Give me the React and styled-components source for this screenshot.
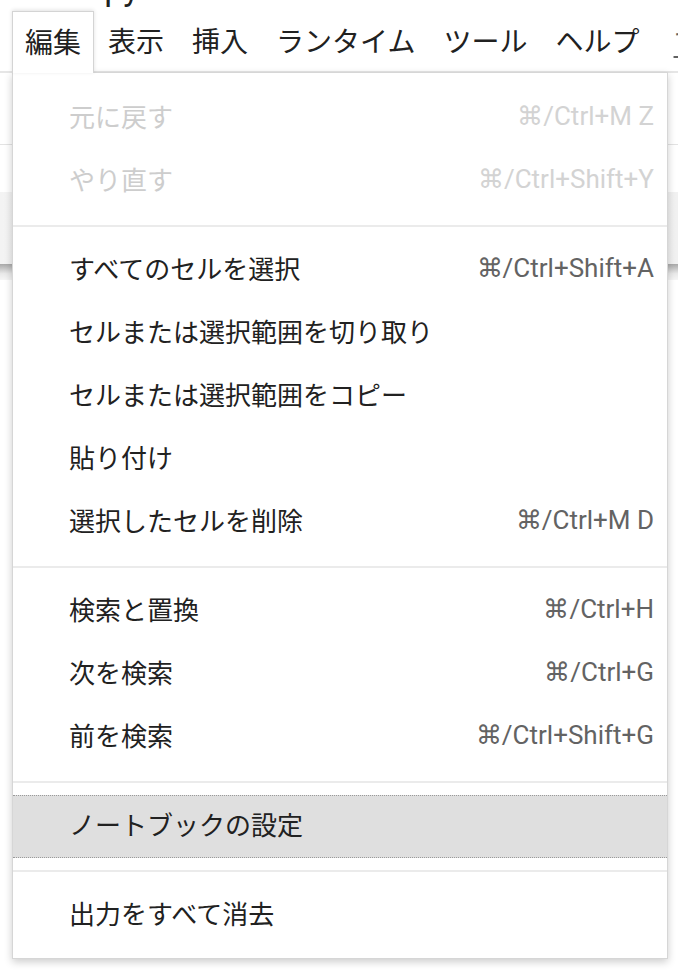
import React from 'react';
import styled, { createGlobalStyle } from 'styled-components';

// #region Styled Components

const GlobalStyle = createGlobalStyle`
  html, body {
    margin: 0;
    padding: 0;
    background: #ffffff;
  }
  body {
    font-family: Roboto, "Noto Sans CJK JP", "Noto Sans", sans-serif;
    color: #212121;
  }
`;

const Page = styled.div`
  position: relative;
  width: 678px;
  height: 970px;
  overflow: hidden;
  background: #ffffff;
`;

const TitleRow = styled.div`
  height: 11px;
  overflow: hidden;
  padding-left: 96px;
`;

const Title = styled.div`
  font-size: 34px;
  line-height: 34px;
  margin-top: -29px;
  color: #212121;
`;

const MenuBar = styled.div`
  display: flex;
  align-items: stretch;
  height: 60px;
  padding-left: 12px;
  border-bottom: 2px solid #e6e6e6;
`;

const MenuBarItem = styled.div`
  position: relative;
  z-index: ${(p) => (p.$open ? 3 : 1)};
  display: flex;
  align-items: center;
  padding: ${(p) => (p.$open ? '0 12px 3px' : '0 13px 3px')};
  font-size: 28px;
  color: #212121;
  white-space: nowrap;
  background: #ffffff;
  border: 1px solid ${(p) => (p.$open ? '#d4d4d4' : 'transparent')};
  border-bottom: none;
  margin-bottom: ${(p) => (p.$open ? '-2px' : '0')};
  box-shadow: ${(p) => (p.$open ? '0 -1px 4px rgba(0, 0, 0, 0.12)' : 'none')};
`;

const SavedLink = styled.div`
  display: flex;
  align-items: center;
  padding-bottom: 3px;
  margin-left: 20px;
  font-size: 28px;
  color: #616161;
  white-space: nowrap;
  text-decoration: underline;
  text-underline-offset: 4px;
`;

const Toolbar = styled.div`
  height: 71px;
  border-bottom: 1px solid #e3e3e3;
`;

const Spacer = styled.div`
  height: 47px;
`;

const CellArea = styled.div`
  height: 72px;
  background: linear-gradient(to right, #f3f3f3, #f9f9f9 30%, #f9f9f9 70%, #f1f1f1);
`;

const CellShade = styled.div`
  height: 16px;
  background: linear-gradient(to bottom, #a9a9a9, #e9e9e9 60%, #f6f6f6);
`;

const Dropdown = styled.div`
  position: absolute;
  z-index: 2;
  top: 72px;
  left: 12px;
  width: 654px;
  padding: 14px 0 11px;
  background: #ffffff;
  border: 1px solid #d6d6d6;
  box-shadow: 0 3px 8px rgba(0, 0, 0, 0.2);
`;

const Row = styled.div`
  display: flex;
  align-items: center;
  justify-content: space-between;
  height: 63px;
  padding: 0 13px 6px 56px;
  box-sizing: border-box;
  font-size: 26px;
  color: ${(p) => (p.$disabled ? '#cdcdcd' : '#212121')};
  background: ${(p) => (p.$active ? '#dfdfdf' : 'transparent')};
  border-top: ${(p) => (p.$active ? '1px dotted #9a9a9a' : 'none')};
  border-bottom: ${(p) => (p.$active ? '1px dotted #9a9a9a' : 'none')};
  white-space: nowrap;
`;

const Shortcut = styled.span`
  font-family: Roboto, "Noto Sans", sans-serif;
  font-size: 26px;
  color: ${(p) => (p.$disabled ? '#d3d3d3' : '#636363')};
`;

const Separator = styled.div`
  height: 2px;
  margin: 12px 0;
  background: #ebebeb;
`;

// #endregion Styled Components

const menuBar = ['編集', '表示', '挿入', 'ランタイム', 'ツール', 'ヘルプ'];

const groups = [
  [
    { label: '元に戻す', shortcut: '⌘/Ctrl+M Z', disabled: true },
    { label: 'やり直す', shortcut: '⌘/Ctrl+Shift+Y', disabled: true },
  ],
  [
    { label: 'すべてのセルを選択', shortcut: '⌘/Ctrl+Shift+A' },
    { label: 'セルまたは選択範囲を切り取り' },
    { label: 'セルまたは選択範囲をコピー' },
    { label: '貼り付け' },
    { label: '選択したセルを削除', shortcut: '⌘/Ctrl+M D' },
  ],
  [
    { label: '検索と置換', shortcut: '⌘/Ctrl+H' },
    { label: '次を検索', shortcut: '⌘/Ctrl+G' },
    { label: '前を検索', shortcut: '⌘/Ctrl+Shift+G' },
  ],
  [{ label: 'ノートブックの設定', active: true }],
  [{ label: '出力をすべて消去' }],
];

const App = () => {
  return (
    <>
      <GlobalStyle />
      <Page>
        <TitleRow>
          <Title>ipynb</Title>
        </TitleRow>

        <MenuBar>
          {menuBar.map((name, i) => (
            <MenuBarItem key={name} $open={i === 0}>{name}</MenuBarItem>
          ))}
          <SavedLink>すべての変更を保存しました</SavedLink>
        </MenuBar>

        <Toolbar />
        <Spacer />
        <CellArea />
        <CellShade />

        <Dropdown>
          {groups.map((group, gi) => (
            <React.Fragment key={gi}>
              {gi > 0 ? <Separator /> : null}
              {group.map((item) => (
                <Row key={item.label} $disabled={item.disabled} $active={item.active}>
                  <span>{item.label}</span>
                  {item.shortcut ? (
                    <Shortcut $disabled={item.disabled}>{item.shortcut}</Shortcut>
                  ) : null}
                </Row>
              ))}
            </React.Fragment>
          ))}
        </Dropdown>
      </Page>
    </>
  );
};

export default App;
